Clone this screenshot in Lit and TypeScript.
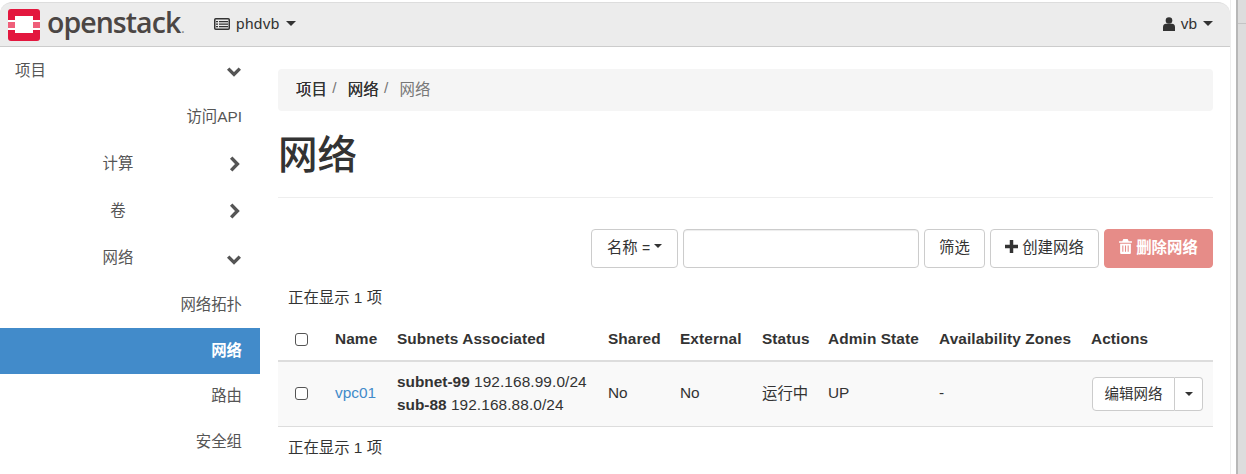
import { LitElement, html, css } from "lit";
import { customElement } from "lit/decorators.js";

const chevDown = html`<svg class="chev down" viewBox="0 0 16 16" width="16" height="16"><path d="M2.2 4.6 L8 10.4 L13.8 4.6" fill="none" stroke="#555" stroke-width="3.4"/></svg>`;
const chevRight = html`<svg class="chev right" viewBox="0 0 16 16" width="16" height="16"><path d="M5.2 1.6 L11.4 8 L5.2 14.4" fill="none" stroke="#555" stroke-width="3.4"/></svg>`;

@customElement("app-root")
export class AppRoot extends LitElement {
  static styles = css`
    :host { display: block; width: 1246px; height: 474px; overflow: hidden; background: #fff; font-family: "Liberation Sans", "Noto Sans CJK SC", sans-serif; font-size: 15.4px; color: #333; }
    .frame { display: flex; height: 474px; background: #fff; }
    .window { width: 1231px; flex: none; box-sizing: border-box; border-right: 1px solid #eee; }
    .gutter { flex: 1; display: flex; }
    .gutter .w { width: 5px; background: #fff; }
    .gutter .g { flex: 1; background: #ddd; border-left: 2px solid #b8b8b8; }
    .gutter .g div { height: 23px; border-bottom: 1px solid #c4c4c4; }
    .nav { margin-top: 2px; background: #ececec; border-top: 1px solid #ddd; border-bottom: 1px solid #ccc; border-radius: 12px 12px 0 0; display: flex; align-items: center; box-sizing: content-box; height: 43px; }
    .logo { margin-left: 8px; display: flex; align-items: center; gap: 7px; width: 198px; flex: none; }
    .wordmark { font-family: "Open Sans", sans-serif; font-size: 28.5px; font-weight: 600; letter-spacing: -0.95px; color: #4b4644; line-height: 32px; margin-top: 1px; }
    .wordmark i { font-style: normal; font-size: 12px; letter-spacing: 0; color: #888; margin-left: 1px; }
    .project { margin-left: 8px; display: flex; align-items: center; gap: 6px; color: #333; padding-bottom: 2px; }
    .project span:first-of-type { letter-spacing: .35px; }
    .caret { display: inline-block; width: 0; height: 0; border-top: 5.5px solid #333; border-left: 5.5px solid transparent; border-right: 5.5px solid transparent; }
    .caret.sm { border-top-width: 4.5px; border-left-width: 4.5px; border-right-width: 4.5px; }
    .user { margin-left: auto; margin-right: 17px; display: flex; align-items: center; gap: 6px; padding-bottom: 2px; }
    .body { display: flex; }
    .side { width: 260px; flex: none; color: #555; }
    .item { height: 47px; display: flex; align-items: center; justify-content: flex-end; padding: 0 18px 3px 0; box-sizing: border-box; }
    .item.top { height: 46px; justify-content: space-between; padding: 0 18px 3px 15px; }
    .item.group { padding-right: 0; }
    .item.group .lbl { flex: none; width: 236px; text-align: center; }
    .item.group .chev { flex: none; margin: 0 18px 0 -10px; }
    .chev.down { margin-top: 7px !important; }
    .chev.right { margin-top: 4px !important; }
    .item.active { height: 46px; padding-bottom: 4px; background: #428bca; color: #fff; font-weight: 700; }
    .item.short { height: 43px; padding-bottom: 4px; }
    .item.last { height: 46px; padding-bottom: 0; }
    .main { flex: 1; padding: 22px 17px 0 18px; min-width: 0; }
    .crumb { height: 42px; box-sizing: border-box; padding: 0 0 4px 18px; background: #f5f5f5; border-radius: 4px; display: flex; align-items: center; gap: 5.5px; }
    .crumb b { font-weight: 400; color: #333; text-shadow: 0 0 .3px #333; }
    .crumb i { font-style: normal; color: #777; }
    .crumb .sep { margin-right: 5.7px; }
    h1 { font-size: 39.6px; font-weight: 500; margin: 21px 0 0; line-height: 46px; color: #333; }
    .rule { height: 1px; background: #eee; margin-top: 19px; }
    .actions { display: flex; justify-content: flex-end; gap: 5px; margin-top: 31px; }
    .btn { height: 39px; box-sizing: border-box; padding-bottom: 5px; border: 1px solid #ccc; border-radius: 4px; background: #fff; display: flex; align-items: center; justify-content: center; gap: 4px; color: #333; }
    .btn.name { width: 87px; }
    .btn.filter { width: 61px; }
    .btn.wide { width: 109px; }
    .eq { font-size: 14px; }
    .search { width: 236px; height: 39px; box-sizing: border-box; border: 1px solid #ccc; border-radius: 4px; box-shadow: inset 0 1px 1px rgba(0,0,0,.075); }
    .danger { background: #e68c88; border-color: #e68c88; color: #fff; font-weight: 700; }
    .count { margin: 0; padding: 0 10px; line-height: 20px; height: 20px; }
    .count.t { margin-top: 20px; }
    .count.b { margin-top: 11px; }
    .grid { display: grid; grid-template-columns: 57px 62px 211px 72px 82px 66px 111px 152px 1fr; }
    .grid > div { display: flex; align-items: center; }
    .head { margin-top: 13px; letter-spacing: .1px; }
    .head > div { height: 36px; font-weight: 700; border-bottom: 2px solid #ddd; padding-bottom: 3px; }
    .row > div { height: 62px; padding-bottom: 2px; background: #f9f9f9; border-bottom: 1px solid #ddd; }
    .row > div.cjk { height: 60px; padding-bottom: 4px; }
    .row > div.act { height: 64px; padding-bottom: 0; }
    .cb { width: 13px; height: 13px; box-sizing: border-box; border: 1.5px solid #555; border-radius: 3px; background: #fff; margin-left: 17px; }
    a { color: #428bca; text-decoration: none; }
    .row .subs { flex-direction: column; align-items: flex-start; justify-content: center; line-height: 23px; }
    .ip { letter-spacing: .1px; }
    .split { display: flex; height: 34px; margin-left: 1px; }
    .split span.part { display: flex; align-items: center; justify-content: center; border: 1px solid #ccc; background: #fff; box-sizing: border-box; }
    .split .l { width: 83px; font-size: 14.5px; padding-bottom: 3px; border-radius: 4px 0 0 4px; }
    .split .r { width: 28px; border-left: 0 !important; border-radius: 0 4px 4px 0; }
  `;

  render() {
    return html`<div class="frame"><div class="window">
      <div class="nav">
        <div class="logo">
          <svg width="32" height="32" viewBox="0 0 32 32"><rect width="32" height="32" rx="3" fill="#e3173e"/><rect x="7" y="7" width="18" height="17" fill="#fff"/><path d="M0 11h7v2H0zM0 19h7v2H0zM25 11h7v2h-7zM25 19h7v2h-7z" fill="#fff"/><path d="M0 13h7v6H0zM25 13h7v6h-7z" fill="#ef5f7a"/></svg>
          <span class="wordmark">openstack<i>.</i></span>
        </div>
        <div class="project">
          <svg width="16" height="12" viewBox="0 0 16 12"><rect x=".75" y=".75" width="14.5" height="10.5" rx="1" fill="none" stroke="#333" stroke-width="1.5"/><path d="M2 3h2v1.3H2zM5 3h9v1.3H5zM2 5.5h2v1.3H2zM5 5.5h9v1.3H5zM2 8h2v1.3H2zM5 8h9v1.3H5z" fill="#333"/></svg>
          <span>phdvb</span><span class="caret"></span>
        </div>
        <div class="user">
          <svg width="12" height="14" viewBox="0 0 12 14"><circle cx="6" cy="3.5" r="3.3" fill="#333"/><path d="M0 14V10c0-2 1.5-3.2 3-3.2h6c1.5 0 3 1.2 3 3.2v4z" fill="#333"/></svg>
          <span>vb</span><span class="caret"></span>
        </div>
      </div>
      <div class="body">
        <div class="side">
          <div class="item top"><span>项目</span>${chevDown}</div>
          <div class="item">访问API</div>
          <div class="item group"><span class="lbl">计算</span>${chevRight}</div>
          <div class="item group"><span class="lbl">卷</span>${chevRight}</div>
          <div class="item group"><span class="lbl">网络</span>${chevDown}</div>
          <div class="item">网络拓扑</div>
          <div class="item active">网络</div>
          <div class="item short">路由</div>
          <div class="item last">安全组</div>
        </div>
        <div class="main">
          <div class="crumb"><b>项目</b><i class="sep">/</i><b>网络</b><i class="sep">/</i><i>网络</i></div>
          <h1>网络</h1>
          <div class="rule"></div>
          <div class="actions">
            <div class="btn name"><span>名称 <span class="eq">=</span></span><span class="caret sm"></span></div>
            <div class="search"></div>
            <div class="btn filter">筛选</div>
            <div class="btn wide">
              <svg width="13" height="13" viewBox="0 0 12 12"><path d="M4.4 0h3.2v4.4H12v3.2H7.6V12H4.4V7.6H0V4.4h4.4z" fill="#333"/></svg>创建网络</div>
            <div class="btn danger wide">
              <svg width="13" height="15" viewBox="0 0 12 14"><path d="M4 0h4l1 2h3v1.5H0V2h3zM1 4.5h10V13a1 1 0 0 1-1 1H2a1 1 0 0 1-1-1z" fill="#fff"/><path d="M3.5 6v6M6 6v6M8.5 6v6" stroke="#e68c88"/></svg>删除网络</div>
          </div>
          <p class="count t">正在显示 1 项</p>
          <div class="grid head">
            <div><span class="cb"></span></div><div>Name</div><div>Subnets Associated</div><div>Shared</div><div>External</div><div>Status</div><div>Admin State</div><div>Availability Zones</div><div>Actions</div>
          </div>
          <div class="grid row">
            <div><span class="cb"></span></div><div><a href="#">vpc01</a></div>
            <div class="subs"><div><b>subnet-99</b> <span class="ip">192.168.99.0/24</span></div><div><b>sub-88</b> <span class="ip">192.168.88.0/24</span></div></div>
            <div>No</div><div>No</div><div class="cjk">运行中</div><div>UP</div><div>-</div>
            <div class="act"><div class="split"><span class="part l">编辑网络</span><span class="part r"><span class="caret sm"></span></span></div></div>
          </div>
          <p class="count b">正在显示 1 项</p>
        </div>
      </div>
    </div><div class="gutter"><div class="w"></div><div class="g"><div></div></div></div></div>`;
  }
}
